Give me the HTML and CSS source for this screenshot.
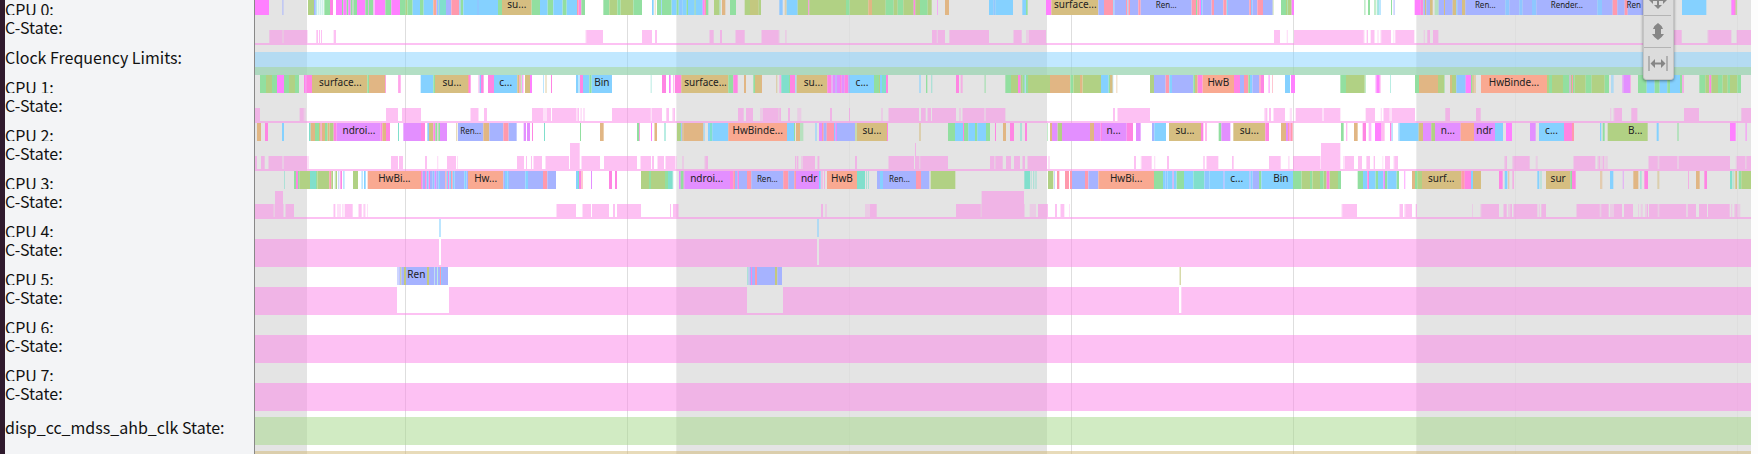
FILE: index.html
```html
<!DOCTYPE html>
<html lang="en">
<head>
<meta charset="utf-8">
<title>CPU trace</title>
<link rel="stylesheet" href="styles.css">
</head>
<body>
<div class="viewer">
  <main class="trace">
    <svg class="timeline-bg" id="timeline-bg" viewBox="0 0 4488 10" preserveAspectRatio="none" aria-hidden="true"></svg>
    <div class="tracks" id="tracks"></div>
  </main>
  <div class="toolbar" role="toolbar" aria-label="Mouse mode">
    <button type="button" class="tool" aria-label="Pan">
      <svg width="20" height="20" viewBox="0 0 20 20"><path d="M10 1l4 4h-3v4h4V6l4 4-4 4v-3h-4v4h3l-4 4-4-4h3v-4H5v3l-4-4 4-4v3h4V5H6z"/></svg>
    </button>
    <button type="button" class="tool" aria-label="Zoom">
      <svg width="20" height="20" viewBox="0 0 20 20"><path d="M10 1q4 2.500 5 6h-2v5h3q-2 3.500-6 6-4-2.500-6-6h3V7H5q1-3.500 5-6z"/></svg>
    </button>
    <button type="button" class="tool" aria-label="Timing">
      <svg width="20" height="20" viewBox="0 0 20 20"><path d="M0.500 2h1v15h-1zM18.500 2h1v15h-1zM2.500 9.500L7 5v3.500h6V5l4.500 4.500L13 14v-3.500H7V14z"/></svg>
    </button>
  </div>
</div>
<script src="trace.js"></script>
</body>
</html>
```
FILE: styles.css
```css
* { box-sizing: border-box; }

body {
  margin: 0;
  background: #fdfdfd;
  color: #111;
  font-family: "Noto Sans CJK SC", "Noto Sans", sans-serif;
  font-size: 16px;
}

.viewer {
  position: relative;
  height: 100vh;
  overflow: hidden;
  border-left: 5px solid #2f1a2d;
  padding-right: 7px;
}

.trace {
  position: relative;
  min-height: 100%;
  background: #fff;
}

.timeline-bg {
  position: absolute;
  top: 0;
  left: 250px;
  width: calc(100% - 250px);
  height: 100%;
}

.band { fill: #e4e4e4; }
.grid-line { fill: #dedede; }

/* The list is scrolled a little past its first row. */
.tracks {
  position: relative;
  margin-top: -3px;
}

.track {
  display: grid;
  grid-template-columns: 250px 1fr;
}

.track-name {
  margin: 0;
  overflow: hidden;
  white-space: nowrap;
  background: #f3f4f6;
  border-right: 1px solid #888;
  font-size: 16px;
  font-weight: 400;
  line-height: 20px;
}

.track-body { position: relative; }

.track-body svg {
  display: block;
  width: 100%;
  height: 100%;
}

.track.cpu { height: 20px; }
.track.cpu .track-name { line-height: 24px; }
.track.cpu .track-name span { display: block; height: 18px; overflow: hidden; }
.track.cpu .track-body { height: 18px; }
.track.state, .track.clock { height: 28px; }
.track.state .track-body, .track.clock .track-body { height: 28px; }
.track.state.spaced { height: 30px; }
.track.gap-after { height: 34px; }

.slice-label {
  position: absolute;
  top: 0;
  display: flex;
  justify-content: center;
  font-family: "Noto Sans", sans-serif;
  font-size: 10px;
  line-height: 15px;
  white-space: nowrap;
  color: #222;
}

.slice-label.small { font-size: 8px; }

.toolbar {
  position: absolute;
  top: -17px;
  right: 84px;
  width: 31px;
  padding: 0 2px 0 0;
  display: flex;
  flex-direction: column;
  background: #dcdcdc;
  border: 1px solid #c4c4c4;
  border-radius: 3px;
  box-shadow: 0 1px 3px rgba(0, 0, 0, .45);
}

.tool {
  display: flex;
  align-items: center;
  justify-content: center;
  height: 32px;
  padding: 0;
  border: 0;
  border-bottom: 1px solid #b4b4b4;
  background: none;
}

.tool:last-child { height: 31px; border-bottom: 0; }
.tool svg { fill: #868686; }
```
FILE: trace.js
```javascript
// Timeline length and the start of each recorded segment, in ticks.
const SPAN = 4488;
const ORIGINS = [-765, 555, 1875, 3189];

const COLORS = {
  M: '#ff80ff', P: '#ff85e3', G: '#92dfa0', O: '#b1d184', B: '#85d1ff',
  K: '#a6b3ff', R: '#ff99ad', S: '#f9a991', T: '#d6be81', N: '#e1b684',
  V: '#e38fff', C: '#80dfcc', L: '#8ec7ff', Y: '#c3c87f'
};
const STATE = '#fb83e7';

// Runs are written as "start CODE end": lower case is a partly covered
// slice, "_" is idle. States: a = low, h = low and brief, z = high.
const TRACKS = [
  { name: 'CPU 0:', type: 'cpu', runs: [
    '765M807_846k851_924O942K946L949c952_955c958_961c964_967c970_973G990P999_1008M1026G1030M1040G1045M1052G1058m1060G1071M1096G1104M1106G1120m1125M1156G1174M1200G1217O1222G1238B1260G1271B1300S1308P1310L1314G1316L1320',
    '0C18K34R58L62G70B111L117B174G186T275G300B323G340B368G380B411R416P424G435_490G508O532G542O580G606_636B641_644t647_651G664B666G695B710G716B720L727B740G744B764G767B788M794R798G805_822O838g842_846N856_870G888_914O930Y956O963_1018L1028_1034t1040B1073O1105P1108O1218G1229O1285N1296O1320',
    '0O17G41O53G70O101P106O120G143O155_171m174_195N207_327B340L346B399_427B438G443_498M514T655K672R700B703K738R742B745R750K775R782K935R948G952R959M963B967K995R1002K1030R1040B1044K1108R1113L1117K1132R1149K1178o1181_1203G1218O1222G1224O1235M1242',
    '138g143_150G156_168g175_178C182b189_219G222_226k231_290M307P315g317K321T325K336T344_350g362K378T381K404T415B418K432T442K562L574K604L614K642L655K838L852K884R898K920R929K1000_1092B1165_1240M1248P1253O1256'],
    labels: [[1, 'su...', 186, 275], [2, 'surface...', 516, 656], [2, 'Ren...', 782, 935, 's'], [3, 'Ren...', 442, 562, 's'], [3, 'Render...', 655, 838, 's'], [3, 'Ren', 917, 978, 's']] },
  { name: 'C-State:', type: 'state spaced', runs: [
    '808a847h851a921h924_949a954_957a960_963a966_1001a1008',
    '436h439a489_606a636_645a651_807h810a821_840a846_885h888a914_963h966a1016h1019_1035h1040',
    '156a170h174a195_207h209a327_399h402a425_438h447a498_1182a1200_1220h1224_1242a1314',
    '0a137h140_146a150_158a168h171_178h182_187h190a219_226h229_232a289_317h321_328a336_345a361_1065a1091_1168h1171a1240_1256a1299'] },
  { name: 'Clock Frequency Limits:', type: 'clock', bars: [['#83d1ff', 5, 23], ['#a5d68b', 20, 8]] },
  { name: 'CPU 1:', type: 'cpu', runs: [
    '780G798O816G831M852G867O885G897_912P916M919P936T1102G1107N1156P1158_1195P1199p1203_1262B1300G1305T1320',
    '0T84R87P92_115p119L123P131_144P162B232T238R242g247M250_255T270M276_309b312_316t320_333P336_408B414b420P429B448G455B516_632c635_666P678_687M692_699p703_705P724T865G880P893_912N918_940G945T963N966_1008t1012_1018p1024C1047G1050P1065b1070T1162P1174v1178V1187K1190V1200P1205V1214P1225K1230B1302G1317O1320',
    '0B6C18P24_117b123_138G142_153c157_228P237_242p248_313g318_376G393O414P422O428G434b438G444O510N571G580O600N608O663B686G690T698b700_709n712_810O822K857R868B876K940G945T953P968S1062P1080K1092R1105G1110B1117K1138R1142P1152_1165m1170_1176r1179_1215B1230_1233M1245',
    '67G84O140g144_172m175M185p188_216c219_291G303N360O378g381_396T402O415L443M459G463T467n474_489S687O693G702O735G755V758O762R765G770O803G821O860G873_879b887_912v916V936p939_960G986B1010G1025B1048G1056B1086G1092p1098_1144G1162O1174P1180O1200G1214O1229G1236O1258G1269'],
    labels: [[0, 'surface...', 936, 1106], [1, 'su...', -12, 84], [1, 'c...', 162, 232], [1, 'Bin', 455, 516], [1, 'surface...', 724, 869], [1, 'su...', 1078, 1162], [1, 'c...', 1230, 1302], [2, 'HwB', 968, 1062], [3, 'HwBinde...', 489, 687]] },
  { name: 'C-State:', type: 'state', runs: [
    '765a780_899a911h917_1158a1194_1206a1263',
    '90h93a114h117_132a141_276a309h321a333_336a408h413a417_421h426_429h435_516a632h636a666_679a687_696h700a705_894a911_918a939_960h969a1015h1018a1023_1044a1050_1072h1084_1170a1176_1227a1230',
    '3h9_24h27a117_123a137_141h144a153_156a228_237h243_246h249a312h318a376_699a705_711h714a810_1152h1156a1162_1167a1173_1179h1182a1215_1229h1236_1247a1314',
    '0a12h18a67_143a171_188h192_195h198a214h222a291_382a396_474a488_876h880_886h889a912_940a958_1098a1143_1270a1299'] },
  { name: 'CPU 2:', type: 'cpu', runs: [
    '771N783_795P804_846B852_927C932N945G957T962P965N975G983N989O1001P1010V1142P1147N1158P1170_1194C1197_1210V1263P1275_1282L1287T1300P1306G1312p1315G1320',
    '0V21_48t52_54K130N148K190R206K230_251V258_261V270_276P279_312C315_420G423_480N491_591G598P600_633M636_642n645N651_672c678_711O720G724K727T730N790b795_804B810C817B865S1041B1062G1065_1068N1080g1090_1125b1131_1137V1146R1151K1160R1182L1186V1191K1245o1251T1320',
    '0T21P24_117t123_204G225B249P252G265B285G292B318G330_345P348_369N378_390P402_420c426_435P441_501g504_510N516V533O546V630N642V662P666V740P759_768V782_816K823B858_867T963P970_975p981_1016G1024V1051_1060T1156P1167_1203N1218V1224R1228P1232R1238',
    '69G77_84p88_108N119_134P144_152m160_171M190p200_216P220b225_240b244B302T315V340O351V428S468V531B555_564M582_636V653_663B738P762R768_846B850_854G860_869O989_1016B1022_1077g1083_1236M1253_1282m1287'],
    labels: [[0, 'ndroi...', 1012, 1142], [1, 'Ren...', 54, 130, 's'], [1, 'HwBinde...', 865, 1041], [1, 'su...', 1251, 1341], [2, 'n...', 662, 740], [2, 'su...', 867, 963], [2, 'su...', 1060, 1156], [3, 'n...', 351, 428], [3, 'ndr', 468, 531], [3, 'c...', 663, 738], [3, 'B...', 915, 989]] },
  { name: 'C-State:', type: 'state', runs: [
    '765a771_783a794_804h807a846h852a921h927_1173a1194_1197a1209_1275a1281_1311h1315',
    '21a48_51h54_231a252_258a261_273a276_279h282a306_315h318a387_390z419_423h426a480_492a591_600h603a633_636a642_651h654a672_675h678a705h711_726h732_793h796a804_1065a1069_1071a1075_1083h1089a1125_1131h1134a1138_1245a1251',
    '24h27a102_105z108a117h121a204_330a342h347a368_378a393_402a420_426h429a435_441h444a501_504h510_762a768_782h785a815_822h826_861a867_970a974_978h981a1015_1056a1061_1167a1202_1224h1229_1239a1314',
    '0a6h9z67_75h81a108_120a132_144h146a156_167a171_193h196_201a216_226h229a240_558h562a567_582h586a635_653h659_765h768a832_838h842a847_850h855a859_862h869_990h993a1019h1024a1077h1083a1236_1253h1257a1281h1286a1299'] },
  { name: 'CPU 3:', type: 'cpu', runs: [
    '852c855_882G888P894G898O930C948G952O988R994O999_1004g1007O1011_1014k1018_1021P1026_1029b1034_1059O1074_1084b1089_1092B1097_1103S1263P1268K1275P1280L1286P1290K1298L1304V1309K1316B1320',
    '0K16R20B24P28B33R38B44K73B80K84S190K195B203L207K256B264K309R322K348_408B414C417P423r429_453V456_507P516_525P531_603O627G633O675G684C698c700_717V722G731P733V870P880R885K893P897K921R934K1030R1045K1063R1068V1137B1142_1144p1148_1152p1155_1161S1251C1275_1278c1281_1284c1287_1311K1320',
    '0B9K108R123K148_152O226_433C450_452c455_459c463_466c470_504O520_522k525_531R538_555R567_570R576K615R625K655S822G849B856L862B878P881B890G912B940C973L988B1030K1034B1108K1112B1118K1137G1144B1239G1265O1290G1297O1314',
    '0O6G17O26P35O60G69_119G135B148P153B173G180B196V201G208B236G243_258m262_282N291G298O312T430R440P459B465T489_543P554_560B568_570n574_583p588_658B664_667c671_684T757G762P773_846n853_876B886_914v918_946N961_966c971_979P990_1018t1024_1110p1113_1134N1145_1159P1167_1236C1243_1246g1249_1252T1257_1262G1270O1299'],
    labels: [[0, 'HwBi...', 1103, 1263], [1, 'Hw...', 84, 190], [1, 'ndroi...', 731, 869], [1, 'Ren...', 934, 1030, 's'], [1, 'ndr', 1078, 1137], [1, 'HwB', 1161, 1251], [2, 'Ren...', 9, 108, 's'], [2, 'HwBi...', 655, 822], [2, 'c...', 1034, 1106], [2, 'Bin', 1166, 1239], [3, 'surf...', 309, 430], [3, 'sur', 684, 757]] },
  { name: 'C-State:', type: 'state', runs: [
    '765a820h825z849h852_855h858a882_999h1002a1006_1011h1023_1026h1031_1034a1058_1074h1077a1085_1089h1093a1096_1101h1104',
    '348h351a408_426h429a453_456a507_519a525_531a603_690a693_699a714h717_1143a1149_1155h1161_1275h1290a1310',
    '228a302h305z432h435_449h468_474a504_525a531_540h543a553_567h570',
    '70h73a117_243h246a255_258h262a282_293a297_462h465_487h490a543_555h558a566_570h577a582_585h588a658_662h666_670a684_774h777a845h850a872_876h888a912_918a945_960h963_968h974_981h987a990_993a1019h1024a1105_1109a1134_1143a1167_1170a1235_1239h1243_1248h1252a1257h1267'] },
  { name: 'CPU 4:', type: 'cpu', runs: ['1317b1320', '0b3_1131b1137'] },
  { name: 'C-State:', type: 'state', runs: ['765z1317', '3z1131_1137z1320', '0z1314', '0z1299'] },
  { name: 'CPU 5:', type: 'cpu', runs: [
    '1191k1198K1201Y1204K1212Y1218K1281Y1287K1302c1304K1311c1314K1320',
    '0R3L6K24_921c925k930K933P936K945R951K1005Y1012K1026', '899Y902'],
    labels: [[0, 'Ren', 1218, 1280]] },
  { name: 'C-State:', type: 'state', runs: ['765z1191', '27z921_1029z1320', '0z897_904z1314', '0z1299'] },
  { name: 'CPU 6:', type: 'cpu', runs: [] },
  { name: 'C-State:', type: 'state', runs: ['765z1320', '0z1320', '0z1314', '0z1299'] },
  { name: 'CPU 7:', type: 'cpu', runs: [] },
  { name: 'C-State:', type: 'state gap-after', runs: ['765z1320', '0z1320', '0z1314', '0z1299'] },
  { name: 'disp_cc_mdss_ahb_clk State:', type: 'clock gap-after', bars: [['#a3d787', 0, 28]] },
  { name: '', type: 'clock', bars: [['#d1b773', 0, 28]] }
];

const rect = (x, y, w, h, fill, alpha) =>
  `<rect x="${x}" y="${y}" width="${w}" height="${h}" fill="${fill}" fill-opacity="${alpha}"/>`;

function eachRun(track, draw) {
  track.runs.forEach((text, segment) => {
    const parts = text.match(/\d+|\D/g);
    for (let i = 0; i + 2 < parts.length; i += 2) {
      if (parts[i + 1] === '_') continue;
      draw(parts[i + 1], ORIGINS[segment] + Number(parts[i]), parts[i + 2] - parts[i]);
    }
  });
}

function drawTrack(track) {
  const isCpu = track.type === 'cpu';
  let shapes = '';
  if (track.bars) {
    track.bars.forEach(([fill, y, h]) => { shapes += rect(0, y, SPAN, h, fill, 0.5); });
  } else if (isCpu) {
    eachRun(track, (code, x, w) => {
      const key = code.toUpperCase();
      shapes += rect(x, 0, w, 18, COLORS[key], code === key ? 1 : 0.55);
    });
  } else {
    shapes += rect(0, 26, SPAN, 2, STATE, 0.5);
    eachRun(track, (code, x, w) => {
      const y = code === 'z' ? 0 : 13;
      shapes += rect(x, y, w, 26 - y, STATE, code === 'h' ? 0.25 : 0.5);
    });
  }
  const labels = (track.labels || []).map(([segment, text, from, to, small]) => {
    const left = (ORIGINS[segment] + from) / SPAN * 100;
    const width = (to - from) / SPAN * 100;
    return `<span class="slice-label${small ? ' small' : ''}" style="left:${left}%;width:${width}%">${text}</span>`;
  }).join('');
  return `<section class="track ${track.type}"><h2 class="track-name"><span>${track.name}</span></h2>` +
    `<div class="track-body"><svg viewBox="0 0 ${SPAN} ${isCpu ? 18 : 28}" preserveAspectRatio="none" aria-hidden="true">${shapes}</svg>${labels}</div></section>`;
}

document.getElementById('tracks').innerHTML = TRACKS.map(drawTrack).join('');

const bands = [[0, 156], [1264, 2376], [3484, SPAN]];
const lines = [450, 1116, 1782, 2448, 3114, 3780, 4446];
document.getElementById('timeline-bg').innerHTML =
  bands.map(([a, b]) => `<rect class="band" x="${a}" y="0" width="${b - a}" height="10"/>`).join('') +
  lines.map(x => `<rect class="grid-line" x="${x}" y="0" width="3" height="10"/>`).join('');
```
